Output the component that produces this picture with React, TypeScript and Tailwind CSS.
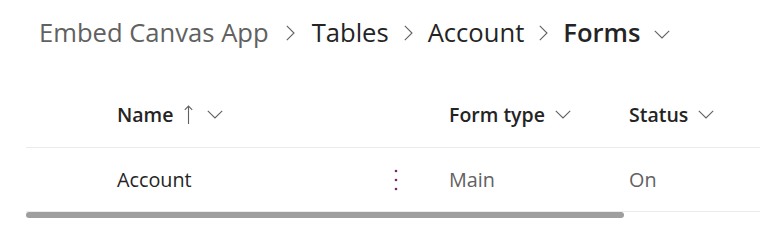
type Column = {
  label: string
  width: string
  sorted?: boolean
}

const columns: Column[] = [
  { label: "Name", width: "w-[332px]", sorted: true },
  { label: "Form type", width: "w-[180px]" },
  { label: "Status", width: "w-[120px]" },
]

const crumbs = ["Embed Canvas App", "Tables", "Account"]

// thin fluent-style glyphs
const Chevron = ({ dir, className }: { dir: "right" | "down"; className?: string }) =>
  dir === "right" ? (
    <svg width="9" height="16" viewBox="0 0 9 16" fill="none" className={className}>
      <polyline points="0.8,0.8 8,8 0.8,15.2" stroke="currentColor" strokeWidth="1.1" />
    </svg>
  ) : (
    <svg width="16" height="9" viewBox="0 0 16 9" fill="none" className={className}>
      <polyline points="0.8,0.8 8,8 15.2,0.8" stroke="currentColor" strokeWidth="1.1" />
    </svg>
  )

const SortUp = () => (
  <svg width="9" height="19" viewBox="0 0 9 19" fill="none" className="text-[#616161]">
    <line x1="4.5" y1="1" x2="4.5" y2="19" stroke="currentColor" strokeWidth="1.1" />
    <polyline points="0.8,4.8 4.5,1 8.2,4.8" stroke="currentColor" strokeWidth="1.1" />
  </svg>
)

const MoreIcon = () => (
  <svg width="4" height="22" viewBox="0 0 4 22" className="text-[#742774]">
    <circle cx="2" cy="2" r="1.3" fill="currentColor" />
    <circle cx="2" cy="11" r="1.3" fill="currentColor" />
    <circle cx="2" cy="20" r="1.3" fill="currentColor" />
  </svg>
)

export default function App() {
  return (
    <div className="w-[760px] h-[240px] bg-white overflow-hidden font-['Open_Sans',sans-serif]">
      {/* breadcrumb */}
      <nav className="flex items-center h-[66px] pl-[39px] text-[25.6px]">
        {crumbs.map((c, i) => (
          <div key={c} className="flex items-center">
            <span className={i === 0 ? "text-[#616161]" : "text-[#242424]"}>{c}</span>
            <Chevron dir="right" className={i === 0 ? "mx-[17px] text-[#616161]" : "mx-[15px] text-[#616161]"} />
          </div>
        ))}
        <span className="font-semibold text-[#242424]">Forms</span>
        <Chevron dir="down" className="ml-[14px] mt-[2px] text-[#616161]" />
      </nav>

      {/* grid */}
      <div className="ml-[26px] mt-[16px]">
        <div className="flex items-center h-[66px] border-b border-[#ebebeb] pl-[91px]">
          {columns.map((col) => (
            <div key={col.label} className={`${col.width} flex items-center text-[19.5px] font-semibold text-[#242424]`}>
              <span>{col.label}</span>
              {col.sorted && (
                <span className="ml-[11px] flex">
                  <SortUp />
                </span>
              )}
              <Chevron dir="down" className={col.sorted ? "ml-[14px] text-[#616161]" : "ml-[10px] text-[#616161]"} />
            </div>
          ))}
        </div>
        <div className="flex items-center h-[64px] border-b border-[#ebebeb] pl-[91px] text-[19.8px]">
          <div className="w-[332px] flex items-center">
            <span className="text-[#242424] w-[277px]">Account</span>
            <MoreIcon />
          </div>
          <div className="w-[180px] text-[#616161]">Main</div>
          <div className="w-[120px] text-[#616161]">On</div>
        </div>
        <div className="h-[6px] w-[598px] rounded-full bg-[#9e9e9e]" />
      </div>
    </div>
  )
}
